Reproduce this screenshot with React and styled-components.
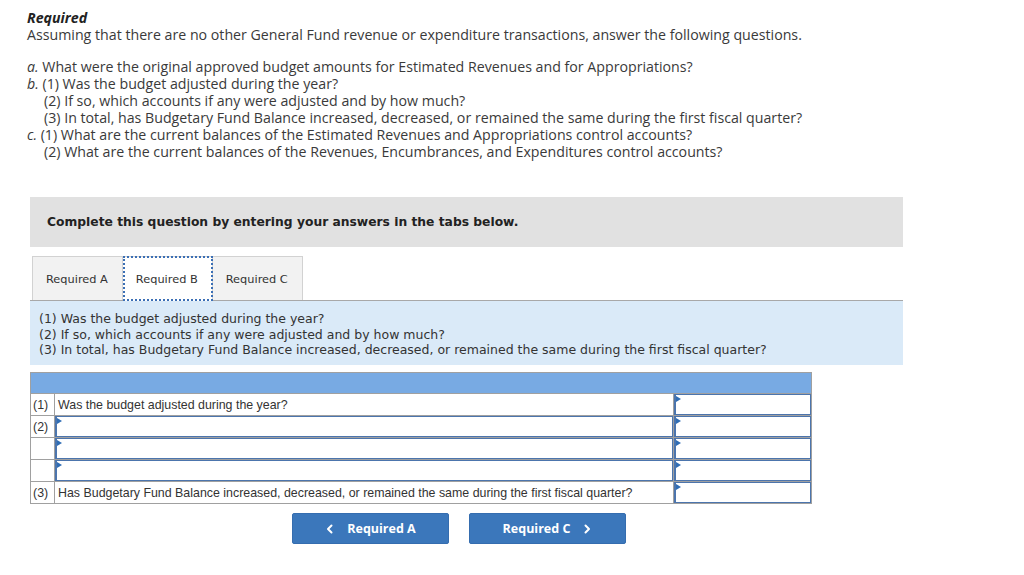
import React from "react";
import styled, { createGlobalStyle } from "styled-components";

const GlobalStyle = createGlobalStyle`
  body {
    margin: 0;
    background: #fff;
    font-family: "Open Sans", Arial, sans-serif;
  }
`;

const questions = [
  { lead: "a.", text: "What were the original approved budget amounts for Estimated Revenues and for Appropriations?" },
  { lead: "b.", text: "(1) Was the budget adjusted during the year?" },
  { lead: "", text: "(2) If so, which accounts if any were adjusted and by how much?" },
  { lead: "", text: "(3) In total, has Budgetary Fund Balance increased, decreased, or remained the same during the first fiscal quarter?" },
  { lead: "c.", text: "(1) What are the current balances of the Estimated Revenues and Appropriations control accounts?" },
  { lead: "", text: "(2) What are the current balances of the Revenues, Encumbrances, and Expenditures control accounts?" },
];

const rows = [
  { num: "(1)", text: "Was the budget adjusted during the year?" },
  { num: "(2)", input: true },
  { num: "", input: true },
  { num: "", input: true },
  { num: "(3)", text: "Has Budgetary Fund Balance increased, decreased, or remained the same during the first fiscal quarter?" },
];

const App = () => {
  return (
    <>
      <GlobalStyle />
      <Page>
        <Intro>
          <Title>Required</Title>
          <Line>Assuming that there are no other General Fund revenue or expenditure transactions, answer the following questions.</Line>
          <List>
            {questions.map((q, i) => (
              <Line key={i} indent={!q.lead}>
                {q.lead && <Lead>{q.lead}</Lead>}
                {q.lead ? " " : ""}
                {q.text}
              </Line>
            ))}
          </List>
        </Intro>

        <Banner>Complete this question by entering your answers in the tabs below.</Banner>

        <Tabs>
          <Tab>Required A</Tab>
          <Tab active>Required B</Tab>
          <Tab>Required C</Tab>
        </Tabs>

        <Prompt>
          <div>(1) Was the budget adjusted during the year?</div>
          <div>(2) If so, which accounts if any were adjusted and by how much?</div>
          <div>(3) In total, has Budgetary Fund Balance increased, decreased, or remained the same during the first fiscal quarter?</div>
        </Prompt>

        <Table>
          <thead>
            <tr>
              <HeadCell colSpan={3} />
            </tr>
          </thead>
          <tbody>
            {rows.map((r, i) => (
              <tr key={i}>
                <NumCell>{r.num}</NumCell>
                {r.input ? (
                  <InputCell>
                    <Flag />
                  </InputCell>
                ) : (
                  <TextCell>{r.text}</TextCell>
                )}
                <InputCell answer>
                  <Flag />
                </InputCell>
              </tr>
            ))}
          </tbody>
        </Table>

        <Nav>
          <NavButton>
            <Chevron viewBox="0 0 10 10">
              <path d="M6.5 1.5 L3 5 L6.5 8.5" />
            </Chevron>
            Required A
          </NavButton>
          <NavButton>
            Required C
            <Chevron viewBox="0 0 10 10">
              <path d="M3.5 1.5 L7 5 L3.5 8.5" />
            </Chevron>
          </NavButton>
        </Nav>
      </Page>
    </>
  );
};

export default App;

const Page = styled.div`
  padding: 9px 0 0 27px;
  width: 876px;
`;

const Intro = styled.div`
  color: #3a3a3a;
  font-size: 14.2px;
  line-height: 17px;
`;

const Title = styled.div`
  font-weight: 700;
  font-style: italic;
  color: #222;
`;

const Line = styled.div`
  white-space: nowrap;
  padding-left: ${props => (props.indent ? "17px" : "0")};
`;

const Lead = styled.span`
  font-style: italic;
`;

const List = styled.div`
  margin-top: 15px;
`;

const Banner = styled.div`
  margin: 37px 0 0 3px;
  height: 50px;
  background: #e1e1e1;
  display: flex;
  align-items: center;
  padding-left: 17px;
  font-family: "DejaVu Sans", Verdana, sans-serif;
  font-weight: 700;
  font-size: 12.3px;
  color: #222;
`;

const Tabs = styled.div`
  display: flex;
  margin: 9px 0 0 3px;
  padding-left: 2px;
  border-bottom: 1px solid #a8a8a8;
`;

const Tab = styled.div`
  display: flex;
  align-items: center;
  padding: 0 14px 0 13px;
  font-family: "DejaVu Sans", Verdana, sans-serif;
  font-size: 11.35px;
  color: #333;
  background: ${props => (props.active ? "#fff" : "#f2f2f2")};
  border: 1px solid #d2d2d2;
  border-bottom: none;
  outline: ${props => (props.active ? "2px dotted #3b6fb5" : "none")};
  outline-offset: -2px;
  margin-bottom: ${props => (props.active ? "-1px" : "0")};
  height: ${props => (props.active ? "44px" : "43px")};
  & + & {
    border-left: none;
  }
`;

const Prompt = styled.div`
  margin-left: 3px;
  background: #daeaf8;
  padding: 10px 0 8px 9px;
  height: 46px;
  font-family: "DejaVu Sans", Verdana, sans-serif;
  font-size: 12.5px;
  line-height: 15.5px;
  color: #333;
  white-space: nowrap;
`;

const Table = styled.table`
  margin: 7px 0 0 3px;
  width: 782px;
  border-collapse: collapse;
  font-family: "Liberation Sans", Arial, sans-serif;
  font-size: 12.4px;
  color: #333;
  border: 1px solid #a0a0a0;
  td {
    height: 21px;
    padding: 0;
    border: 1px solid #a0a0a0;
  }
`;

const HeadCell = styled.th`
  height: 20px;
  background: #78aae3;
  padding: 0;
  border: 1px solid #a0a0a0;
`;

const NumCell = styled.td`
  width: 21px;
  padding-left: 2px !important;
  text-align: left;
  white-space: nowrap;
`;

const TextCell = styled.td`
  padding-left: 3px !important;
  white-space: nowrap;
`;

const InputCell = styled.td`
  position: relative;
  width: ${props => (props.answer ? "137px" : "auto")};
  box-shadow: inset 0 0 0 1px #4c75ad, inset 2px 0 0 0 #4c75ad;
`;

const Flag = styled.span`
  position: absolute;
  left: 2px;
  top: 2px;
  width: 0;
  height: 0;
  border-top: 3px solid transparent;
  border-bottom: 3px solid transparent;
  border-left: 5px solid #2f6db5;
`;

const Nav = styled.div`
  display: flex;
  gap: 20px;
  margin: 9px 0 0 265px;
`;

const NavButton = styled.button`
  width: 157px;
  height: 31px;
  border: 1px solid #356daf;
  border-radius: 2px;
  background: #3b77bb;
  color: #fff;
  font-family: "Open Sans", Arial, sans-serif;
  font-weight: 700;
  font-size: 12.5px;
  display: flex;
  align-items: center;
  justify-content: center;
  gap: 12px;
  cursor: pointer;
`;

const Chevron = styled.svg`
  width: 10px;
  height: 10px;
  fill: none;
  stroke: #fff;
  stroke-width: 2;
  stroke-linecap: round;
  stroke-linejoin: round;
`;
